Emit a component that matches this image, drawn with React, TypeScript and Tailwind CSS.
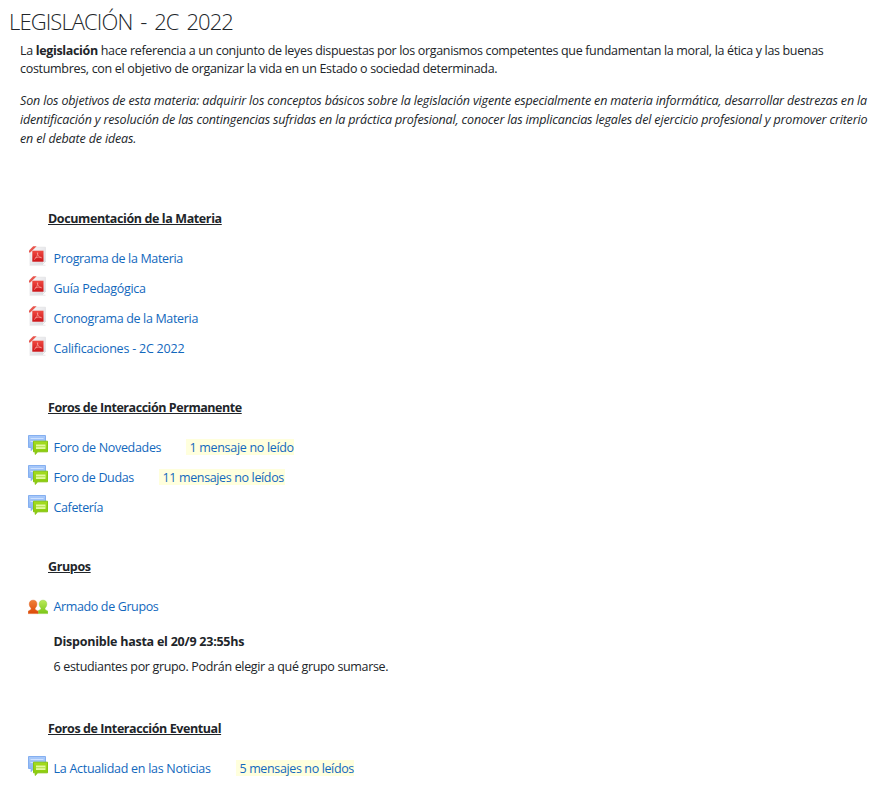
import type { ReactNode } from "react";

function PdfIcon() {
  return (
    <svg width="20" height="20" viewBox="0 0 20 20" className="shrink-0">
      <defs>
        <linearGradient id="pdfRed" x1="0" y1="0" x2="0" y2="1">
          <stop offset="0" stopColor="#f04a42" />
          <stop offset="1" stopColor="#cc1418" />
        </linearGradient>
        <linearGradient id="pdfPage" x1="0" y1="0" x2="1" y2="1">
          <stop offset="0" stopColor="#fafafa" />
          <stop offset="1" stopColor="#d8d8de" />
        </linearGradient>
      </defs>
      <path d="M7.5 1.2H17.5V15.5L14.5 18.5H2V6.2Z" fill="url(#pdfPage)" stroke="#dddde0" strokeWidth=".6" />
      <path d="M14.5 18.5 14.8 15.8 17.5 15.5Z" fill="#fff" stroke="#cfcfd2" strokeWidth=".4" />
      <path d="M1.5 19.2H17.5" stroke="#e2e2e4" strokeWidth=".8" />
      <rect x="4.3" y="4.7" width="11.2" height="11" fill="url(#pdfRed)" />
      <path d="M1 4.4 5.2.2H8.6L2.2 6.4H1Z" fill="#e8554d" />
      <path d="M9.3 6.6C9.1 8.6 11 11.6 13.6 12M9.8 6.6C10 9 8.3 12 6 13.6M7.2 12C9 11.2 11.6 10.8 13.6 11.4" fill="none" stroke="#fbb5af" strokeWidth=".6" />
    </svg>
  );
}

function ForumIcon() {
  return (
    <svg width="20" height="20" viewBox="0 0 20 20" className="shrink-0">
      <defs>
        <linearGradient id="bubbleBlue" x1="0" y1="0" x2="0" y2="1">
          <stop offset="0" stopColor="#a9c9fa" />
          <stop offset="1" stopColor="#86b2f2" />
        </linearGradient>
        <linearGradient id="bubbleGreen" x1="0" y1="0" x2="0" y2="1">
          <stop offset="0" stopColor="#a6dc20" />
          <stop offset="1" stopColor="#84c808" />
        </linearGradient>
      </defs>
      <path d="M.5.5H17.5V12.5H5.5L3.2 15.5V12.5H.5Z" fill="url(#bubbleBlue)" stroke="#84aff0" />
      <path d="M2.5 3.5H15.5M2.5 6.5H15.5" stroke="#cfe2ff" />
      <path d="M5.5 6.2H19.5V16.8H9.8L7.2 19.4V16.8H5.5Z" fill="url(#bubbleGreen)" stroke="#86c413" />
      <rect x="8" y="9.5" width="9.5" height="4.5" fill="#e2fa9e" />
      <path d="M8 11.7H17.5" stroke="#b3e04e" />
    </svg>
  );
}

function GroupIcon() {
  return (
    <svg width="20" height="20" viewBox="0 0 20 20" className="mt-px shrink-0">
      <defs>
        <linearGradient id="personOrange" x1="0" y1="0" x2="0" y2="1">
          <stop offset="0" stopColor="#f08038" />
          <stop offset="1" stopColor="#dc4908" />
        </linearGradient>
        <linearGradient id="personGreen" x1="0" y1="0" x2="0" y2="1">
          <stop offset="0" stopColor="#b9ea58" />
          <stop offset="1" stopColor="#7ac517" />
        </linearGradient>
      </defs>
      <path d="M15 5.2C12.6 5.2 11.2 6.6 11.2 9C11.2 10.9 12 12.2 13 13V14.2L10.2 15.7V18.6H19.9V16.2L17 14.4V13C18 12.2 18.8 10.8 18.8 8.9C18.8 6.6 17.4 5.2 15 5.2Z" fill="url(#personGreen)" stroke="#8dcc32" strokeWidth=".5" />
      <path d="M5.1 5.2C2.7 5.2 1.3 6.6 1.3 9C1.3 10.9 2.1 12.2 3.1 13V14.4L.2 16.2V18.6H10V16.2L7.1 14.4V13C8.1 12.2 8.9 10.8 8.9 8.9C8.9 6.6 7.5 5.2 5.1 5.2Z" fill="url(#personOrange)" stroke="#df5a17" strokeWidth=".5" />
    </svg>
  );
}

function Line({ children, className }: { children: ReactNode; className: string }) {
  return <span className={`block w-max whitespace-nowrap ${className}`}>{children}</span>;
}

function Heading({ children, className }: { children: ReactNode; className: string }) {
  return (
    <h2 className="ml-12 h-5 pt-px leading-5 font-bold">
      <span className={`underline decoration-1 underline-offset-1 ${className}`}>{children}</span>
    </h2>
  );
}

function Item({ icon, label, className, children }: { icon: ReactNode; label: string; className: string; children?: ReactNode }) {
  return (
    <li className="flex h-[30px] items-start pl-7">
      {icon}
      <a className={`mt-[3px] ml-[5.5px] leading-5 whitespace-nowrap text-[#1268bd] ${className}`}>{label}</a>
      {children}
    </li>
  );
}

function Unread({ children, className }: { children: ReactNode; className: string }) {
  return <a className={`mt-[4px] h-4 bg-[#ffffdd] pl-1 leading-[18px] whitespace-nowrap text-[#1268bd] ${className}`}>{children}</a>;
}

export default function App() {
  return (
    <main className="h-[785px] w-[874px] overflow-hidden bg-white font-['Open_Sans','Noto_Sans',sans-serif] text-[12.5px] text-[#212529]">
      <h1 className="ml-[9px] h-[42px] pt-[6px] text-[22px] leading-[30px] font-light">
        <Line className="tracking-[-0.9px] [word-spacing:3px]">LEGISLACIÓN - 2C 2022</Line>
      </h1>
      <p className="ml-5 leading-[18px]">
        <Line className="tracking-[-0.338px]">La <b>legislación</b> hace referencia a un conjunto de leyes dispuestas por los organismos competentes que fundamentan la moral, la ética y las buenas</Line>
        <Line className="tracking-[-0.31px]">costumbres, con el objetivo de organizar la vida en un Estado o sociedad determinada.</Line>
      </p>
      <p className="mt-[13px] ml-5 leading-[19px] italic">
        <Line className="tracking-[-0.15px]">Son los objetivos de esta materia: adquirir los conceptos básicos sobre la legislación vigente especialmente en materia informática, desarrollar destrezas en la</Line>
        <Line className="tracking-[-0.16px]">identificación y resolución de las contingencias sufridas en la práctica profesional, conocer las implicancias legales del ejercicio profesional y promover criterio</Line>
        <Line className="tracking-[-0.15px]">en el debate de ideas.</Line>
      </p>
      <section className="mt-[60px]">
        <Heading className="tracking-[-0.39px]">Documentación de la Materia</Heading>
        <ul className="mt-[18px]">
          <Item icon={<PdfIcon />} label="Programa de la Materia" className="tracking-[-0.34px]" />
          <Item icon={<PdfIcon />} label="Guía Pedagógica" className="tracking-[-0.28px]" />
          <Item icon={<PdfIcon />} label="Cronograma de la Materia" className="tracking-[-0.33px]" />
          <Item icon={<PdfIcon />} label="Calificaciones - 2C 2022" className="tracking-[-0.22px]" />
        </ul>
      </section>
      <section className="mt-[31px]">
        <Heading className="tracking-[-0.45px]">Foros de Interacción Permanente</Heading>
        <ul className="mt-[18px]">
          <Item icon={<ForumIcon />} label="Foro de Novedades" className="w-[132px] tracking-[-0.32px]">
            <Unread className="w-[108px] tracking-[-0.31px]">1 mensaje no leído</Unread>
          </Item>
          <Item icon={<ForumIcon />} label="Foro de Dudas" className="w-[105px] tracking-[-0.36px]">
            <Unread className="w-[126px] tracking-[-0.36px]">11 mensajes no leídos</Unread>
          </Item>
          <Item icon={<ForumIcon />} label="Cafetería" className="tracking-[-0.36px]" />
        </ul>
      </section>
      <section className="mt-[31px]">
        <Heading className="tracking-[-0.36px]">Grupos</Heading>
        <ul className="mt-[18px]">
          <Item icon={<GroupIcon />} label="Armado de Grupos" className="tracking-[-0.37px]" />
        </ul>
        <div className="mt-[8px] ml-[53.5px] leading-5">
          <Line className="font-bold tracking-[-0.24px]">Disponible hasta el 20/9 23:55hs</Line>
          <p className="mt-[5px]"><Line className="tracking-[-0.34px]">6 estudiantes por grupo. Podrán elegir a qué grupo sumarse.</Line></p>
        </div>
      </section>
      <section className="mt-[41px]">
        <Heading className="tracking-[-0.41px]">Foros de Interacción Eventual</Heading>
        <ul className="mt-[18px]">
          <Item icon={<ForumIcon />} label="La Actualidad en las Noticias" className="w-[182px] tracking-[-0.28px]">
            <Unread className="w-[118px] tracking-[-0.37px]">5 mensajes no leídos</Unread>
          </Item>
        </ul>
      </section>
    </main>
  );
}
